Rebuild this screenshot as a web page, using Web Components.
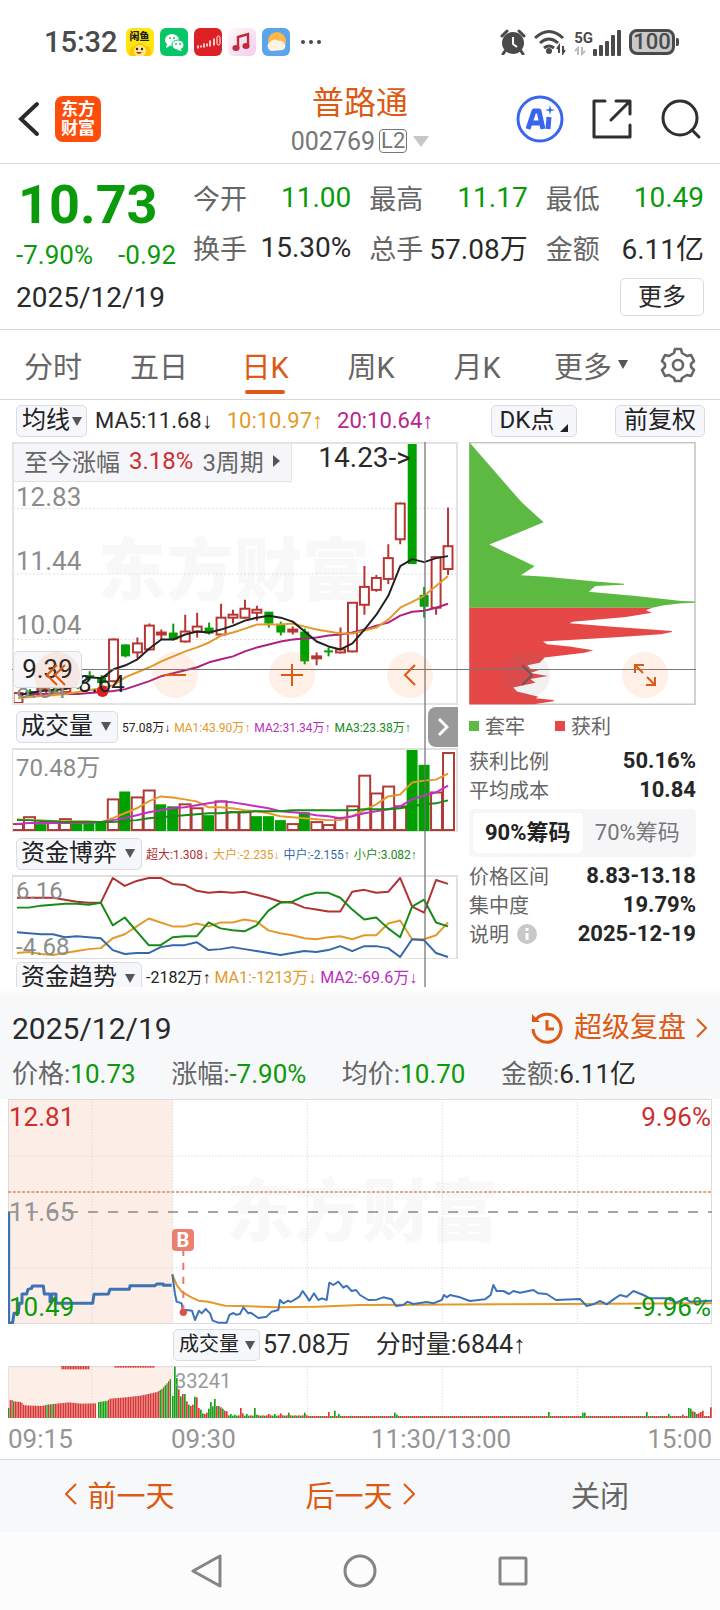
<!DOCTYPE html>
<html lang="zh-CN">
<head>
<meta charset="utf-8">
<meta name="viewport" content="width=device-width, initial-scale=1">
<title>普路通 002769</title>
<style>
  :root {
    --ink: #2a2a2a;
    --gray: #666;
    --mute: #959595;
    --accent: #dc5a14;
    --up: #cc2f2f;
    --down: #0a9a0a;
    --amber: #e39a2b;
    --violet: #b8248c;
    --line: #d8d8d8;
    --panel: #f7f8fa;
  }
  body {
    margin: 0;
    background: #fff;
    color: var(--ink);
    font-family: Roboto, "Liberation Sans", "Noto Sans CJK SC", sans-serif;
  }
</style>
</head>
<body>
<stock-app></stock-app>

<script>
const RESET = `
  *, *::before, *::after { box-sizing: border-box; }
  button, select { font: inherit; color: inherit; background: none; border: 0; margin: 0; padding: 0; }
  svg { display: block; flex: none; }
  a { color: inherit; text-decoration: none; }
`;

function define(name, css, html, setup) {
  const template = document.createElement('template');
  template.innerHTML = `<style>${RESET}${css}</style>${html}`;
  customElements.define(name, class extends HTMLElement {
    constructor() {
      super();
      this.attachShadow({ mode: 'open' }).append(template.content.cloneNode(true));
    }
    connectedCallback() {
      if (setup && !this.ready) { this.ready = true; setup(this, this.shadowRoot); }
    }
  });
}

/* ---------- system status bar ---------- */
define('status-bar', `
  :host { display: flex; align-items: center; height: 84px; padding: 0 41px 0 44px; color: #4a4a4a; }
  .time { font-size: 29px; font-weight: 500; margin-right: 8px; }
  .apps { display: flex; gap: 6px; }
  .right { margin-left: auto; display: flex; align-items: center; gap: 8px; }
  .fish { position: relative; width: 28px; height: 28px; border-radius: 6px; background: #ffe60f; overflow: hidden; }
  .fish span { position: absolute; top: 3px; left: 0; width: 100%; text-align: center; font-size: 10px; line-height: 11px; font-weight: 900; color: #222; }
  .fish svg { position: absolute; left: 0; bottom: 0; }
  .dots { margin-left: 10px; }
  .net { display: flex; flex-direction: column; font-size: 15px; line-height: 16px; font-weight: 700; }
  .cell { display: flex; align-items: flex-end; height: 28px; }
  .battery { display: flex; align-items: center; }
  .battery b { border: 3px solid #4a4a4a; border-radius: 8px; background: #c9c9c9; height: 26px; width: 46px; font-size: 22px; line-height: 20px; font-weight: 500; text-align: center; }
  .battery i { width: 3px; height: 8px; margin-left: 1px; border-radius: 0 2px 2px 0; background: #4a4a4a; }
`, `
  <span class="time">15:32</span>
  <div class="apps">
    <div class="fish"><span>闲鱼</span>
      <svg width="28" height="15" viewBox="0 0 28 15"><path d="M4 15C2 9 5 5 9 5c2-4 8-4 10 0 5 0 7 5 6 10z" fill="#ffc800"/><circle cx="14" cy="10" r="6" fill="#ffe98a"/><circle cx="11" cy="8" r="1.2" fill="#222"/><circle cx="16" cy="8" r="1.2" fill="#222"/><path d="M10 11h6q-3 4-6 0z" fill="#d22"/></svg>
    </div>
    <svg width="28" height="28"><rect width="28" height="28" rx="6" fill="#07c668"/><ellipse cx="12" cy="12" rx="7" ry="6" fill="#fff"/><path d="M7 16l-1 4 4-2z" fill="#fff"/><ellipse cx="18" cy="17" rx="6" ry="5" fill="#fff" stroke="#07c668"/><path d="M20 20l2 3-5-1z" fill="#fff"/><g fill="#07c668"><circle cx="10" cy="10" r="1"/><circle cx="14" cy="10" r="1"/><circle cx="16" cy="16" r="1"/><circle cx="20" cy="16" r="1"/></g></svg>
    <svg width="28" height="28"><rect width="28" height="28" rx="6" fill="#dd1f26"/><path d="M4 20v-2M7 18v1M10 16v3M13 18v-2M16 13v5M20 11v6" stroke="#fff" stroke-width="1.5" stroke-linecap="round"/><rect x="23" y="8" width="3" height="9" rx="1.5" fill="none" stroke="#fff"/></svg>
    <svg width="28" height="28"><defs><linearGradient id="m" x1="0" y1="0" x2="1" y2="1"><stop offset="0" stop-color="#fff8f6"/><stop offset="1" stop-color="#f1cdf0"/></linearGradient></defs><rect width="28" height="28" rx="6" fill="url(#m)"/><path d="M10 20V9l10-3v11" fill="none" stroke="#c22a3c" stroke-width="2.4"/><ellipse cx="8" cy="20" rx="3.6" ry="3" fill="#c22a3c"/><ellipse cx="18" cy="18" rx="3.6" ry="3" fill="#c22a3c"/></svg>
    <svg width="28" height="28"><rect width="28" height="28" rx="6" fill="#5aa5ec"/><circle cx="15" cy="13" r="9" fill="#ffb74a"/><path d="M9 23a5 5 0 0 1-1-9 6 6 0 0 1 9-1 5 5 0 0 1 4 9z" fill="#fdf3e2"/></svg>
  </div>
  <svg class="dots" width="22" height="6" fill="#4a4a4a"><circle cx="3" cy="3" r="2"/><circle cx="11" cy="3" r="2"/><circle cx="19" cy="3" r="2"/></svg>
  <div class="right">
    <svg width="26" height="26" viewBox="0 0 26 26"><circle cx="13" cy="14" r="11" fill="#4a4a4a"/><path d="M2 7l5-5M24 7l-5-5M5 22l-2 3M21 22l2 3" stroke="#4a4a4a" stroke-width="3" stroke-linecap="round"/><path d="M13 8v7l4 3" fill="none" stroke="#fff" stroke-width="2"/></svg>
    <svg width="32" height="26" viewBox="0 0 32 26"><g fill="none" stroke="#4a4a4a" stroke-width="3"><path d="M1 9q14-13 28 0"/><path d="M6 14q9-8 18 0"/><path d="M10 19q5-4 10 0"/></g><circle cx="15" cy="22" r="3" fill="#4a4a4a"/><path d="M25 24v-7l-2 3M29 17v7l2-3" fill="none" stroke="#4a4a4a" stroke-width="2"/></svg>
    <div class="cell">
      <div class="net"><span>5G</span><svg width="12" height="10" fill="none" stroke="#bbb" stroke-width="2"><path d="M4 9V2L1 5M8 1v7l3-3"/></svg></div>
      <svg width="28" height="26" fill="#4a4a4a"><rect x="0" y="19" width="4" height="7" rx="1"/><rect x="6" y="15" width="4" height="11" rx="1"/><rect x="12" y="11" width="4" height="15" rx="1"/><rect x="18" y="5" width="4" height="21" rx="1"/><rect x="24" y="0" width="4" height="26" rx="1"/></svg>
    </div>
    <div class="battery"><b>100</b><i></i></div>
  </div>
`);

/* ---------- title bar ---------- */
define('stock-header', `
  :host { display: grid; grid-template-columns: 1fr auto 1fr; height: 80px; padding: 0 18px; border-bottom: 1px solid var(--line); }
  .side { display: flex; align-items: center; height: 70px; }
  .left { gap: 15px; }
  .right { justify-content: flex-end; gap: 28px; }
  .logo { width: 46px; height: 46px; border-radius: 8px; background: #ff4d0a; color: #fff; font-size: 17px; line-height: 19px; font-weight: 700; text-align: center; padding-top: 4px; }
  h1 { margin: 0; font-size: 32px; line-height: 38px; font-weight: 400; color: var(--accent); text-align: center; }
  .code { display: flex; align-items: center; gap: 4px; height: 38px; font-size: 25px; color: #777; }
  .code b { font-weight: 400; font-size: 22px; line-height: 22px; border: 1px solid #777; border-radius: 4px; padding: 0 1px; }
  .code svg { margin-left: 2px; }
  button { display: block; }
`, `
  <div class="side left">
    <button aria-label="返回"><svg width="22" height="36" fill="none" stroke="#2a2a2a" stroke-width="4" stroke-linecap="round"><path d="M19 3L3 18l16 15"/></svg></button>
    <div class="logo">东方<br>财富</div>
  </div>
  <div>
    <h1>普路通</h1>
    <div class="code"><span>002769</span><b>L2</b><svg width="16" height="11" fill="#c6c6c6"><path d="M0 0h16L8 11z"/></svg></div>
  </div>
  <div class="side right">
    <button aria-label="AI"><svg width="48" height="48" viewBox="0 0 48 48"><circle cx="24" cy="24" r="22" fill="#fff" stroke="#3a66ee" stroke-width="3"/><path d="M12 34l6-18h5l4 18M15 28h11" fill="none" stroke="#3a66ee" stroke-width="5" stroke-linejoin="round"/><path d="M33 22l-1 12" stroke="#3a66ee" stroke-width="5"/><path d="M34 10l1 4 4 1-4 1-1 4-1-4-4-1 4-1z" fill="#3a66ee"/></svg></button>
    <button aria-label="分享"><svg width="40" height="40" fill="none" stroke="#2f2f2f" stroke-width="3" stroke-linecap="round" stroke-linejoin="round"><path d="M13 2H2v36h36V26M24 2h14v13M37 3L19 21"/></svg></button>
    <button aria-label="搜索"><svg width="42" height="42" fill="none" stroke="#2f2f2f" stroke-width="3" stroke-linecap="round"><circle cx="20" cy="20" r="17"/><path d="M32 32l7 7"/></svg></button>
  </div>
`);

/* ---------- one label and its figure ---------- */
define('quote-item', `
  :host { display: flex; align-items: center; justify-content: space-between; height: 50px; font-size: 28px; white-space: nowrap; }
  .label { color: var(--gray); font-size: 27px; }
`, `<span class="label"><slot name="label"></slot></span><span><slot></slot></span>`);

define('quote-summary', `
  :host { display: block; padding: 8px 16px 7px; border-bottom: 1px solid var(--line); }
  .top { display: grid; grid-template-columns: 160px 1fr; gap: 17px; }
  .price { font-size: 54px; line-height: 66px; font-weight: 700; color: var(--down); padding-left: 2px; }
  .change { display: flex; justify-content: space-between; font-size: 26px; line-height: 34px; color: var(--down); white-space: nowrap; }
  .grid { display: grid; grid-template-columns: repeat(3, 1fr); column-gap: 18px; }
  .down { color: var(--down); }
  .bottom { display: flex; align-items: center; justify-content: space-between; height: 50px; font-size: 28px; }
  button { width: 84px; height: 38px; border: 1px solid #dcdcdc; border-radius: 5px; font-size: 24px; line-height: 30px; }
`, `
  <div class="top">
    <div>
      <div class="price">10.73</div>
      <div class="change"><span>-7.90%</span><span>-0.92</span></div>
    </div>
    <div class="grid">
      <quote-item class="down"><span slot="label">今开</span>11.00</quote-item>
      <quote-item class="down"><span slot="label">最高</span>11.17</quote-item>
      <quote-item class="down"><span slot="label">最低</span>10.49</quote-item>
      <quote-item><span slot="label">换手</span>15.30%</quote-item>
      <quote-item><span slot="label">总手</span>57.08万</quote-item>
      <quote-item><span slot="label">金额</span>6.11亿</quote-item>
    </div>
  </div>
  <div class="bottom"><span>2025/12/19</span><button>更多</button></div>
`);

/* ---------- period tabs ---------- */
define('period-tabs', `
  :host { display: grid; grid-template-columns: repeat(6, 106fr) 84fr; height: 70px; border-bottom: 1px solid var(--line); font-size: 29px; color: var(--gray); }
  button { position: relative; display: flex; align-items: center; justify-content: center; gap: 6px; white-space: nowrap; }
  .on { color: var(--accent); }
  .on::after { content: ""; position: absolute; left: 50%; bottom: 5px; width: 40px; height: 4px; margin-left: -20px; border-radius: 2px; background: var(--accent); }
  .more { padding-left: 16px; }
`, `
  <button>分时</button><button>五日</button><button class="on">日K</button><button>周K</button><button>月K</button>
  <button class="more">更多<svg width="10" height="9" fill="#555"><path d="M0 0h10L5 9z"/></svg></button>
  <button aria-label="设置"><svg width="36" height="36" viewBox="0 0 36 36" fill="none" stroke="#666" stroke-width="2.6" stroke-linejoin="round"><path d="M15 2h6l1 4 5 3 4-1 3 6-3 3v3l3 3-3 6-4-1-5 3-1 3h-6l-1-3-5-3-4 1-3-6 3-3v-3l-3-3 3-6 4 1 5-3z"/><circle cx="18" cy="18" r="5"/></svg></button>
`);

/* ---------- drop-down chip ---------- */
define('drop-chip', `
  :host { display: inline-grid; flex: none; align-items: center; height: 32px; border: 1px solid #d9dce2; border-radius: 5px; background: #f6f7fa; font-size: 24px; line-height: normal; color: #222; }
  select { grid-area: 1 / 1; appearance: none; height: 30px; padding: 0 24px 3px 4px; outline: 0; }
  svg { grid-area: 1 / 1; justify-self: end; margin-right: 6px; pointer-events: none; }
  :host([compact]) select { padding: 0 16px 3px 5px; }
  :host([compact]) svg { margin-right: 4px; }
  :host([small]) { font-size: 20px; }
  :host([small]) select { padding-right: 20px; }
`, `<select><option></option></select><svg width="10" height="9" fill="#555"><path d="M0 0h10L5 9z"/></svg>`,
(host, root) => {
  root.querySelector('option').textContent = host.getAttribute('value');
  root.querySelector('select').setAttribute('aria-label', host.getAttribute('label'));
});

/* ---------- toolbar over the charts ---------- */
define('chart-toolbar', `
  :host { display: flex; align-items: center; height: 42px; padding: 0 15px 0 16px; font-size: 22px; white-space: nowrap; }
  .ma { display: flex; gap: 14px; margin-left: 8px; }
  .a { color: var(--amber); } .b { color: var(--violet); }
  button { height: 32px; border: 1px solid #d9dce2; border-radius: 5px; background: #f6f7fa; font-size: 24px; line-height: 26px; padding-bottom: 3px; color: #222; }
  .dk { display: flex; align-items: center; justify-content: center; width: 86px; margin-left: auto; }
  .dk svg { align-self: flex-end; margin: 0 0 1px 6px; }
  .fq { width: 90px; margin-left: 38px; }
`, `
  <drop-chip compact label="指标" value="均线"></drop-chip>
  <div class="ma"><span>MA5:11.68↓</span><span class="a">10:10.97↑</span><span class="b">20:10.64↑</span></div>
  <button class="dk">DK点<svg width="8" height="8" fill="#222"><path d="M8 0v8H0z"/></svg></button>
  <button class="fq">前复权</button>
`);

/* ---------- chart data: one entry per trading day, in plot units ---------- */
const STEP = 12, FIRST = 17;
const dayX = i => FIRST + STEP * i;
const line = (ys, color) =>
  `<polyline fill="none" stroke="${color}" stroke-width="2" stroke-linejoin="round" points="${ys.map((y, i) => dayX(i) + ',' + y).join(' ')}"/>`;

// direction, high, body top, body bottom, low
const CANDLES = [
  ['r',694,694,704,705],['g',690,692,697,699],['r',688,690,696,698],['g',688,690,695,697],['r',684,687,693,695],['g',680,682,688,690],
  ['g',672,676,679,681],['g',676,678,684,686],['r',639,640,682,683],['g',645,645,657,658],['r',638,644,653,659],['r',624,626,650,651],
  ['r',630,633,635,640],['g',624,633,640,641],['r',615,632,642,643],['r',613,627,632,638],['g',623,628,634,635],['r',604,618,635,636],
  ['r',610,615,618,624],['r',600,609,618,619],['r',606,610,613,621],['g',612,612,624,628],['g',622,625,633,636],['r',627,630,632,635],
  ['g',629,632,662,665],['r',653,657,659,666],['g',648,651,653,657],['r',628,650,653,654],['r',603,603,652,653],['r',566,587,605,615],
  ['r',575,578,590,592],['r',544,558,579,584],['r',502,503,539,544],['g',442,442,564,564],['g',587,595,607,618],['r',556,557,608,615],
  ['r',507,546,569,575]
];
const MA5 = [696,694,692,691,690,686,678,679,670,666,660,649,640,640,635,632,633,630,626,621,618,616,618,622,632,642,647,650,644,630,615,596,566,559,562,558,556];
const MA10 = [699,698,697,696,695,693,691,689,686,678,673,668,662,657,652,648,643,636,633,629,625,625,625,624,627,630,632,634,634,631,628,620,608,602,596,586,576];
const MA20 = [695,695,695,695,695,695,694,693,692,690,686,682,677,674,671,668,663,660,657,652,648,645,642,640,639,638,636,635,633,630,626,623,616,612,611,608,604];

define('kline-chart', `
  :host { display: block; position: relative; height: 263px; border: 2px solid #e3e3e3; background: #fff; overflow: hidden; }
  .plot { position: absolute; inset: 0; width: 100%; height: 100%; }
  .mark { position: absolute; left: 84px; top: 80px; font-size: 68px; line-height: 96px; font-weight: 900; color: #f8f8f8; white-space: nowrap; }
  .scale { position: absolute; left: 2px; top: 39px; bottom: 0; display: flex; flex-direction: column; justify-content: space-between; font-size: 26px; line-height: 28px; color: #8c8c8c; }
  .since { position: absolute; left: 0; top: 0; display: flex; align-items: center; gap: 9px; height: 38px; padding: 0 11px 4px 10px; border: 1px solid #e3e3e3; border-width: 0 1px 1px 0; background: #f6f6fa; font-size: 24px; color: var(--gray); white-space: nowrap; }
  .since b { font-weight: 400; color: var(--up); }
  .peak { position: absolute; right: 45px; top: -1px; font-size: 28px; line-height: 30px; }
  .low { position: absolute; left: 64px; bottom: 4px; font-size: 24px; line-height: 30px; color: #222; }
`, `
  <div class="mark">东方财富</div>
  <svg class="plot" preserveAspectRatio="none" viewBox="13 443 444 261"></svg>
  <div class="scale"><span>12.83</span><span>11.44</span><span>10.04</span><span>8.64</span></div>
  <span class="low">8.64</span>
  <span class="peak">14.23-&gt;</span>
  <div class="since"><span>至今涨幅</span><b>3.18%</b><span>3周期</span><svg width="7" height="12" fill="#555"><path d="M0 0l7 6-7 6z"/></svg></div>
`, (host, root) => {
  const grid = [508, 574, 640].map(y => `<path d="M12 ${y}H458" stroke="#dedede" stroke-dasharray="2 2"/>`).join('');
  const candles = CANDLES.map(([c, hi, top, bot, lo], i) => {
    const x = dayX(i);
    return c === 'g'
      ? `<path d="M${x} ${hi}V${lo}" stroke="#0a9a0a" stroke-width="2"/><rect x="${x - 4.5}" y="${top}" width="9" height="${bot - top}" fill="#00a000"/>`
      : `<path d="M${x} ${hi}V${top}M${x} ${bot}V${lo}" stroke="#b83532" stroke-width="2"/><rect x="${x - 4.5}" y="${top}" width="9" height="${bot - top}" fill="#fff" stroke="#b83532" stroke-width="2"/>`;
  }).join('');
  root.querySelector('.plot').innerHTML = grid + candles + line(MA20, '#b0207f') + line(MA10, '#e39a2b') + line(MA5, '#222') +
    '<circle cx="102" cy="692" r="6" fill="#e02020"/>';
});

/* ---------- title row of a sub chart ---------- */
define('sub-head', `
  :host { display: flex; align-items: center; gap: 4px; height: 43px; padding-left: 4px; font-size: 12px; white-space: nowrap; }
  :host([wide]) { height: 38px; font-size: 16px; line-height: 16px; }
`, `<drop-chip></drop-chip><slot></slot>`, (host, root) => {
  const chip = root.querySelector('drop-chip');
  chip.shadowRoot.querySelector('option').textContent = host.getAttribute('value');
  chip.shadowRoot.querySelector('select').setAttribute('aria-label', '副图指标');
  chip.setAttribute('value', host.getAttribute('value'));
});

const PLOT_CSS = `
  :host { display: block; position: relative; height: 84px; border: 1px solid #e0e0e0; border-width: 2px 2px 1px 1px; background: #fff; }
  svg { position: absolute; inset: 0; width: 100%; height: 100%; }
  .scale { position: absolute; left: 3px; font-size: 24px; line-height: 26px; color: #8c8c8c; }
`;
const VOLUME = 'r824 r817 g824 r823 r819 g822 g822 g822 r799 g791 r797 r790 g804 g806 r804 r808 g815 r801 r812 r812 g816 g816 g820 r824 g812 r822 r825 r818 r806 r775 r793 r786 r806 g748 g764 r792 r752';
define('volume-chart', PLOT_CSS, `
  <svg preserveAspectRatio="none" viewBox="13 749 444 82"></svg>
  <span class="scale" style="top:5px">70.48万</span>
`, (host, root) => {
  const bars = VOLUME.split(' ').map((v, i) => {
    const x = dayX(i), y = +v.slice(1);
    return v[0] === 'g'
      ? `<rect x="${x - 5.5}" y="${y}" width="11" height="${831 - y}" fill="#00a000"/>`
      : `<rect x="${x - 5}" y="${y}" width="11" height="${830 - y}" fill="#fff" stroke="#b03a38" stroke-width="2"/>`;
  }).join('');
  root.querySelector('svg').innerHTML = bars +
    line([819,820,820,821,821,821,821,822,818,813,808,801,796,797,799,801,807,807,808,810,811,813,816,817,818,819,820,820,816,810,804,796,794,782,780,779,773], '#e39a2b') +
    line([824,823,823,823,823,823,823,822,820,818,815,812,810,808,807,805,803,801,802,804,806,808,811,812,813,815,816,818,816,813,811,809,806,799,795,792,785], '#c42fc4') +
    line([820,820,821,821,822,822,822,822,822,821,820,818,817,816,815,814,813,813,812,812,811,811,811,810,810,810,810,810,810,809,809,809,808,806,804,803,800], '#178a17');
});

define('fund-chart', PLOT_CSS, `
  <svg preserveAspectRatio="none" viewBox="13 876 444 82"></svg>
  <span class="scale" style="top:1px">6.16</span><span class="scale" style="bottom:-2px">-4.68</span>
`, (host, root) => {
  root.querySelector('svg').innerHTML =
    line([897,897,897,897,899,901,902,902,877,885,880,877,877,883,884,890,892,891,892,891,894,897,901,902,907,909,911,911,891,889,892,891,877,906,912,879,883], '#b03232') +
    line([953,952,954,955,953,951,949,948,938,934,926,918,922,926,926,923,926,922,922,919,921,930,933,935,938,939,937,936,939,935,935,923,920,939,939,935,922], '#e39a2b') +
    line([907,907,905,904,903,903,904,902,925,917,931,945,945,937,936,936,922,928,930,931,925,910,902,901,895,892,892,897,909,919,917,928,937,906,899,922,926], '#178a17') +
    line([932,933,934,934,937,936,937,938,950,954,953,953,947,945,945,942,950,949,947,949,951,953,955,953,951,952,950,946,951,946,946,948,957,939,940,953,957], '#3568a8');
});

/* ---------- chip distribution ---------- */
define('info-row', `
  :host { display: flex; align-items: center; justify-content: space-between; height: 29px; font-size: 20px; color: var(--gray); white-space: nowrap; }
  .name { display: flex; align-items: center; gap: 8px; }
  .value { font-size: 22px; font-weight: 700; color: #262626; }
`, `<span class="name"><slot name="name"></slot></span><span class="value"><slot></slot></span>`);

define('chip-panel', `
  :host { display: block; }
  .plot { width: 100%; height: 263px; }
  .legend { display: flex; gap: 30px; align-items: center; height: 41px; font-size: 20px; color: var(--gray); }
  .legend span { display: flex; align-items: center; gap: 6px; }
  .legend i { width: 10px; height: 10px; background: #5cba43; }
  .legend .r { background: #e64848; }
  .toggle { display: grid; grid-template-columns: 1fr 1fr; height: 48px; margin: 5px 0 4px; padding: 4px; border-radius: 5px; background: #f6f6f9; font-size: 22px; color: #777; }
  .toggle button { line-height: 30px; border-radius: 5px; white-space: nowrap; }
  .toggle .on { background: #fff; color: #222; font-weight: 700; }
`, `
  <svg class="plot" preserveAspectRatio="none" viewBox="27 141 684 792">
    <rect x="29" y="143" width="679" height="788" fill="#fff" stroke="#c8c8c8" stroke-width="5"/>
    <path fill="#5cba43" d="M28 142L185 322 252 383 88 450 225 515 183 542 260 547 415 562 494 568V571L408 575 388 592 530 605 668 620 708 621V625L660 627 610 633 580 640H28z"/>
    <path fill="#e64848" d="M28 640H580L560 648 578 655 500 668 340 682 330 687 460 697 638 710V713L605 720 470 729 330 737 250 742 262 750 330 757 402 768 375 776 255 790 240 806 203 813 212 824 240 827 212 837 265 846 212 855 227 866 160 880 172 892 236 908 228 913 282 918V922L222 931H28z"/>
  </svg>
  <div class="legend"><span><i></i>套牢</span><span><i class="r"></i>获利</span></div>
  <info-row><span slot="name">获利比例</span>50.16%</info-row>
  <info-row><span slot="name">平均成本</span>10.84</info-row>
  <div class="toggle"><button class="on">90%筹码</button><button>70%筹码</button></div>
  <info-row><span slot="name">价格区间</span>8.83-13.18</info-row>
  <info-row><span slot="name">集中度</span>19.79%</info-row>
  <info-row><span slot="name">说明</span><svg slot="name" width="20" height="20"><circle cx="10" cy="10" r="10" fill="#c8c8c8"/><path d="M10 4v3M10 9v7" stroke="#fff" stroke-width="3"/></svg>2025-12-19</info-row>
`);

/* ---------- board: charts, cross-hair and floating controls ---------- */
define('chart-board', `
  :host { position: relative; display: grid; grid-template-columns: 446fr 227fr; column-gap: 11px; padding: 0 24px 0 12px; max-height: 545px; overflow: hidden; }
  .cols { min-width: 0; }
  .a { color: var(--amber); } .p { color: #b82fc0; } .g { color: #178a17; } .r { color: #b03232; } .b { color: #3568a8; } .k { color: #222; }
  .h { position: absolute; left: 12px; right: 24px; top: 227px; height: 1px; background: #777; }
  .v { position: absolute; left: 59%; top: 0; bottom: 0; width: 2px; margin-left: -1px; background: rgba(110,110,110,.6); }
  .tag { position: absolute; left: 13px; top: 209px; width: 69px; height: 37px; border: 1px solid #d9dce2; border-radius: 5px; background: #f6f7fa; font-size: 26px; line-height: 35px; text-align: center; color: #222; z-index: 1; }
  .tools { position: absolute; left: 34px; right: 52px; top: 210px; display: flex; justify-content: space-between; z-index: 2; }
  .tools button { display: grid; place-items: center; width: 46px; height: 46px; border-radius: 50%; background: rgba(245,110,40,.11); }
  .tools .dim { background: rgba(120,120,120,.1); }
  .open { position: absolute; right: 262px; top: 265px; width: 30px; height: 40px; border-radius: 8px 0 0 8px; background: #999; display: grid; place-items: center; }
`, `
  <div class="cols">
    <kline-chart></kline-chart>
    <sub-head value="成交量"><span class="k">57.08万↓</span><span class="a">MA1:43.90万↑</span><span class="p">MA2:31.34万↑</span><span class="g">MA3:23.38万↑</span></sub-head>
    <volume-chart></volume-chart>
    <sub-head value="资金博弈"><span class="r">超大:1.308↓</span><span class="a">大户:-2.235↓</span><span class="b">中户:-2.155↑</span><span class="g">小户:3.082↑</span></sub-head>
    <fund-chart></fund-chart>
    <sub-head wide value="资金趋势"><span class="k">-2182万↑</span><span class="a">MA1:-1213万↓</span><span class="p">MA2:-69.6万↓</span></sub-head>
  </div>
  <chip-panel></chip-panel>
  <div class="h"></div><div class="v"></div>
  <div class="tag">9.39</div>
  <div class="tools">
    <button aria-label="最前"><svg width="22" height="24" fill="none" stroke="#dc5a14" stroke-width="2"><path d="M11 2L1 12l10 10M19 2L9 12l10 10"/></svg></button>
    <button aria-label="缩小"><svg width="22" height="22" stroke="#dc5a14" stroke-width="2"><path d="M0 11h22"/></svg></button>
    <button aria-label="放大"><svg width="22" height="22" stroke="#dc5a14" stroke-width="2"><path d="M0 11h22M11 0v22"/></svg></button>
    <button aria-label="左移"><svg width="12" height="22" fill="none" stroke="#dc5a14" stroke-width="2"><path d="M11 1L1 11l10 10"/></svg></button>
    <button class="dim" aria-label="右移"><svg width="12" height="22" fill="none" stroke="#6f5557" stroke-width="2"><path d="M1 1l10 10L1 21"/></svg></button>
    <button aria-label="全屏"><svg width="24" height="24" fill="none" stroke="#dc5a14" stroke-width="2"><path d="M2 10V2h9M2 2l8 8M22 14v8h-9M22 22l-8-8"/></svg></button>
  </div>
  <button class="open" aria-label="展开"><svg width="12" height="20" fill="none" stroke="#fff" stroke-width="3"><path d="M2 2l8 8-8 8"/></svg></button>
`);

/* ---------- intraday replay ---------- */
define('replay-head', `
  :host { display: block; padding: 6px 12px 6px; background: var(--panel); white-space: nowrap; }
  .row { display: flex; align-items: center; justify-content: space-between; height: 46px; }
  .date { font-size: 30px; }
  a { display: flex; align-items: center; gap: 10px; font-size: 28px; line-height: 34px; color: var(--accent); }
  .figures { height: 42px; padding-right: 72px; padding-bottom: 2px; font-size: 26px; color: var(--gray); }
  .figures b { font-weight: 400; color: var(--down); }
  .figures .k { color: var(--ink); }
`, `
  <div class="row"><span class="date">2025/12/19</span>
    <a href="#replay"><svg width="34" height="34" fill="none" stroke="#dc5a14" stroke-width="3"><path d="M5 10A14 14 0 1 1 3 18M17 9v9h7"/><path d="M2 3v8h8z" fill="#dc5a14" stroke="none"/></svg>超级复盘<svg width="12" height="20" fill="none" stroke="#dc5a14" stroke-width="2"><path d="M1 1l9 9-9 9"/></svg></a>
  </div>
  <div class="row figures"><span>价格:<b>10.73</b></span><span>涨幅:<b>-7.90%</b></span><span>均价:<b>10.70</b></span><span>金额:<b class="k">6.11亿</b></span></div>
`);

define('intraday-chart', `
  :host { display: block; position: relative; height: 225px; margin: 0 8px; overflow: hidden; }
  .plot { position: absolute; inset: 0; width: 100%; height: 100%; }
  .mark { position: absolute; left: 31%; top: 66px; font-size: 68px; line-height: 96px; font-weight: 900; color: #f8f8f8; white-space: nowrap; }
  span { position: absolute; font-size: 26px; line-height: 30px; }
  .l { left: 1px; } .r { right: 1px; } .up { top: 3px; color: var(--up); } .mid { top: 98px; color: var(--mute); } .dn { bottom: 2px; color: var(--down); }
  .buy { left: 164px; top: 130px; width: 22px; height: 22px; border-radius: 4px; background: #ec8070; color: #fff; font-size: 20px; line-height: 22px; font-weight: 700; text-align: center; }
`, `
  <div class="mark">东方财富</div>
  <svg class="plot" preserveAspectRatio="none" viewBox="24 327 2112 675">
    <path fill="#fbe3d8" fill-opacity=".65" d="M24 327H518V1002H24z"/>
    <path fill="none" stroke="#dcdcdc" stroke-width="3" stroke-dasharray="4 5" d="M276 327V1002M518 327V1002M922 327V1002M1327 327V1002M1732 327V1002M24 498H2136M24 834H2136"/>
    <path fill="none" stroke="#dcdcdc" stroke-width="6" d="M24 327V1002H2136V327z"/>
    <path stroke="#cf8f63" stroke-width="4" stroke-dasharray="9 5" d="M24 606H2136"/>
    <path stroke="#888" stroke-width="5" stroke-dasharray="30 30" d="M24 666H2136"/>
    <g fill="none" stroke-linejoin="round">
      <path stroke="#e39a2b" stroke-width="6" d="M517 853L530 885 545 905 570 920 595 932 625 935 675 947 720 948 830 952 950 950 1080 945 1500 943 2136 940"/>
      <path stroke="#3d73b5" stroke-width="9" d="M26 667V1000L38 998 42 970H55L58 940H66V912H80L84 898 95 895 97 888H130L133 912H150V935H155V912H168V940H278L282 913 325 912 330 898H388L390 887 465 887 470 882H490V886H515"/>
      <path stroke="#3d73b5" stroke-width="6" d="M517 853L525 912 530 935 545 940 548 962 560 960 576 962 585 990 597 962 605 970 617 957 630 970 638 992 655 998H680L688 975 700 969 708 974 720 972 730 952 745 970 752 968 775 984 800 980 815 965 835 960 840 930 850 940 865 932 872 936 890 925 898 920 908 903 920 920 928 932 942 910 955 930 966 925 980 930 988 878 1000 885 1015 875 1030 893 1040 887 1055 903 1068 900 1080 915 1105 930 1130 929 1150 922 1175 928 1188 948 1210 945 1222 935 1240 942 1280 936 1300 940 1325 930 1332 915 1340 922 1350 915 1380 922 1410 933 1455 928 1472 915 1480 885 1490 903H1510L1527 912 1540 903 1560 908 1600 900 1615 910 1640 912 1668 930 1740 927 1760 948 1780 943 1800 933 1820 943 1845 925 1860 915 1880 920 1900 903 1930 915 1950 925H2000L2030 938 2055 925 2070 935 2136 932"/>
    </g>
    <path stroke="#e87a70" stroke-width="6" stroke-dasharray="22 20" d="M550 776V960"/>
    <circle cx="550" cy="967" r="11" fill="#e05048"/>
  </svg>
  <span class="l up">12.81</span><span class="r up">9.96%</span>
  <span class="l mid">11.65</span>
  <span class="l dn">10.49</span><span class="r dn">-9.96%</span>
  <span class="buy">B</span>
`);

// opening-auction outline: x, bar height
const AUCTION = [[24,30],[30,58],[38,50],[62,48],[70,38],[125,36],[140,40],[205,47],[240,43],[285,44],[294,48],[318,51],[328,58],[375,62],[420,67],[470,78],[485,88],[500,105],[510,118],[512,120]];
// continuous-trading peaks: x, bar height, direction
const PEAKS = {516:'66g',522:'154g',528:'120g',534:'86r',540:'65g',546:'72r',552:'72g',558:'50r',564:'40g',570:'36r',576:'40r',582:'64g',588:'62r',594:'30r',600:'25g',606:'14g',612:'12r',618:'16r',624:'28g',630:'48g',636:'35g',642:'57g',648:'36r',654:'36g',660:'32r',666:'28g',672:'22r',678:'20r',684:'8g',690:'12g',702:'10g',720:'30r',726:'14r',738:'12g',762:'30g',768:'10g',804:'12r',822:'12g',840:'14r',864:'16g',912:'16g',984:'18r',1002:'22g',1014:'12g',1182:'16g',1188:'10g',1644:'18g',1746:'16g',1752:'16g',1938:'18g',2004:'12g',2046:'10r',2064:'30g',2070:'28g',2076:'20r',2082:'18g',2088:'12r',2094:'14r',2100:'18r',2106:'22r',2130:'32r'};
define('minute-volume', `
  :host { display: block; position: relative; height: 52px; margin: 0 8px; }
  svg { width: 100%; height: 100%; }
  span { position: absolute; left: 167px; top: 3px; font-size: 20px; line-height: 24px; color: #999; }
`, `<svg preserveAspectRatio="none" viewBox="24 138 2112 156"></svg><span>33241</span>`, (host, root) => {
  const red = '#d83a3a', green = '#18a018';
  let out = `<path fill="#fdeee7" d="M24 138H518V294H24z"/>
    <path fill="none" stroke="#dcdcdc" stroke-width="3" stroke-dasharray="4 5" d="M276 138V294M518 138V294M922 138V294M1327 138V294M1732 138V294"/>
    <path fill="none" stroke="#dedede" stroke-width="5" d="M24 294V139H2135V294"/>`;
  const heightAt = x => {
    for (let k = 1; k < AUCTION.length; k++) {
      const [x0, h0] = AUCTION[k - 1], [x1, h1] = AUCTION[k];
      if (x <= x1) return h0 + (h1 - h0) * (x - x0) / (x1 - x0);
    }
    return 0;
  };
  for (let x = 24; x < 512; x += 5) {
    if (x > 284 && x < 293) continue;
    const h = heightAt(x);
    const g = x < 28 || (x > 35 && x < 42) || (x > 130 && x < 160 && x % 2) || (x > 293 && x < 320) || (x > 474 && x % 3);
    out += `<rect x="${x}" y="${294 - h}" width="4" height="${h}" fill="${g ? green : red}"/>`;
    if ((x > 182 && x < 268) || (x > 340 && x < 460)) out += `<rect x="${x}" y="138" width="4" height="${x < 270 ? 10 : 5}" fill="${red}"/>`;
  }
  for (let x = 516; x < 2136; x += 6) {
    const p = PEAKS[x] || (x < 920 ? (x % 4 ? '8r' : '7g') : (x % 5 ? '6r' : '6g'));
    const h = parseInt(p);
    out += `<rect x="${x}" y="${294 - h}" width="5" height="${h}" fill="${p.endsWith('g') ? green : red}"/>`;
  }
  root.querySelector('svg').innerHTML = out;
});

define('replay-panel', `
  :host { display: block; }
  .edge { height: 12px; background: linear-gradient(#fff, #f7f7f7); }
  .vol { display: flex; align-items: center; height: 42px; padding-left: 173px; font-size: 25px; line-height: 32px; white-space: nowrap; }
  .vol span { margin-left: 3px; }
  .vol .minute { margin-left: 25px; }
  .axis { display: grid; grid-template-columns: 163fr 200fr 144fr 197fr; height: 42px; padding: 0 8px; align-items: center; font-size: 26px; color: var(--mute); border-bottom: 1px solid var(--line); white-space: nowrap; }
  .axis :last-child { text-align: right; }
`, `
  <div class="edge"></div>
  <replay-head></replay-head>
  <intraday-chart></intraday-chart>
  <div class="vol"><drop-chip small compact label="分时指标" value="成交量"></drop-chip><span>57.08万</span><span class="minute">分时量:6844↑</span></div>
  <minute-volume></minute-volume>
  <div class="axis"><span>09:15</span><span>09:30</span><span>11:30/13:00</span><span>15:00</span></div>
`);

/* ---------- bottom bars ---------- */
define('day-bar', `
  :host { display: grid; grid-template-columns: repeat(3, 1fr); height: 72px; background: var(--panel); font-size: 29px; color: var(--accent); }
  button { display: flex; align-items: center; justify-content: center; gap: 10px; padding-bottom: 4px; }
  .close { color: var(--gray); }
`, `
  <button><svg width="12" height="22" fill="none" stroke="#dc5a14" stroke-width="2"><path d="M11 1L1 11l10 10"/></svg>前一天</button>
  <button>后一天<svg width="12" height="22" fill="none" stroke="#dc5a14" stroke-width="2"><path d="M1 1l10 10L1 21"/></svg></button>
  <button class="close">关闭</button>
`);

define('nav-bar', `
  :host { display: flex; justify-content: center; height: 78px; background: #fcfcfc; }
  button { width: 153px; display: grid; place-items: center; }
`, `
  <button aria-label="后退"><svg width="32" height="34" fill="none" stroke="#858585" stroke-width="3" stroke-linejoin="round"><path d="M29 2v30L2 17z"/></svg></button>
  <button aria-label="主页"><svg width="34" height="34" fill="none" stroke="#858585" stroke-width="3"><circle cx="17" cy="17" r="15"/></svg></button>
  <button aria-label="最近任务"><svg width="30" height="30" fill="none" stroke="#858585" stroke-width="3"><rect x="2" y="2" width="26" height="26" rx="1"/></svg></button>
`);

define('stock-app', `:host { display: block; }`, `
  <status-bar></status-bar>
  <stock-header></stock-header>
  <quote-summary></quote-summary>
  <period-tabs></period-tabs>
  <chart-toolbar></chart-toolbar>
  <chart-board></chart-board>
  <replay-panel></replay-panel>
  <day-bar></day-bar>
  <nav-bar></nav-bar>
`);
</script>
</body>
</html>
